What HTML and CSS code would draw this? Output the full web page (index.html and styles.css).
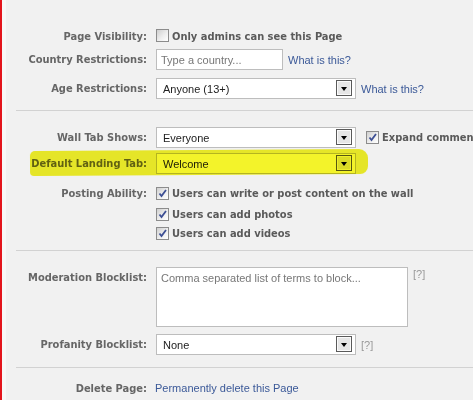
FILE: index.html
```html
<!DOCTYPE html>
<html>
<head>
<meta charset="utf-8">
<link rel="stylesheet" href="styles.css">
</head>
<body>
<div class="page">
  <div class="group g1">
    <div class="row r-vis">
      <span class="lbl">Page Visibility:</span>
      <div class="ctl"><span class="cb"></span><span class="check-text">Only admins can see this Page</span></div>
    </div>
    <div class="row r-country">
      <span class="lbl">Country Restrictions:</span>
      <div class="ctl"><span class="input">Type a country...</span><a class="link">What is this?</a></div>
    </div>
    <div class="row r-age">
      <span class="lbl">Age Restrictions:</span>
      <div class="ctl"><span class="select"><span class="val">Anyone (13+)</span><span class="arrow"><span class="tri"></span></span></span><a class="link">What is this?</a></div>
    </div>
  </div>
  <div class="sep"></div>
  <div class="group g2">
    <div class="row r-wall">
      <span class="lbl">Wall Tab Shows:</span>
      <div class="ctl"><span class="select"><span class="val">Everyone</span><span class="arrow"><span class="tri"></span></span></span><span class="cb checked gap"><svg viewBox="0 0 11 11" width="11" height="11"><path d="M2.5 5.5 L4.5 8 L9 2" fill="none" stroke="#3d4f94" stroke-width="1.8"/></svg></span><span class="check-text">Expand comments</span></div>
    </div>
    <div class="row r-landing">
      <span class="lbl">Default Landing Tab:</span>
      <div class="ctl"><span class="select"><span class="val">Welcome</span><span class="arrow"><span class="tri"></span></span></span></div>
    </div>
    <div class="row r-post">
      <span class="lbl">Posting Ability:</span>
      <div class="ctl"><span class="cb checked"><svg viewBox="0 0 11 11" width="11" height="11"><path d="M2.5 5.5 L4.5 8 L9 2" fill="none" stroke="#3d4f94" stroke-width="1.8"/></svg></span><span class="check-text">Users can write or post content on the wall</span></div>
    </div>
    <div class="row r-post2">
      <span class="lbl"></span>
      <div class="ctl"><span class="cb checked"><svg viewBox="0 0 11 11" width="11" height="11"><path d="M2.5 5.5 L4.5 8 L9 2" fill="none" stroke="#3d4f94" stroke-width="1.8"/></svg></span><span class="check-text">Users can add photos</span></div>
    </div>
    <div class="row r-post3">
      <span class="lbl"></span>
      <div class="ctl"><span class="cb checked"><svg viewBox="0 0 11 11" width="11" height="11"><path d="M2.5 5.5 L4.5 8 L9 2" fill="none" stroke="#3d4f94" stroke-width="1.8"/></svg></span><span class="check-text">Users can add videos</span></div>
    </div>
  </div>
  <div class="sep"></div>
  <div class="group g3">
    <div class="row r-mod">
      <span class="lbl">Moderation Blocklist:</span>
      <div class="ctl top"><span class="textarea">Comma separated list of terms to block...</span><span class="help">[?]</span></div>
    </div>
    <div class="row r-prof">
      <span class="lbl">Profanity Blocklist:</span>
      <div class="ctl"><span class="select"><span class="val">None</span><span class="arrow"><span class="tri"></span></span></span><span class="help">[?]</span></div>
    </div>
  </div>
  <div class="sep"></div>
  <div class="group g4">
    <div class="row r-del">
      <span class="lbl">Delete Page:</span>
      <div class="ctl"><a class="link del">Permanently delete this Page</a></div>
    </div>
  </div>
</div>
</body>
</html>
```
FILE: styles.css
```css
html, body {
  margin: 0;
  padding: 0;
  overflow: hidden;
}
body {
  font-family: "Liberation Sans", Arial, sans-serif;
  font-size: 11px;
  color: #333;
  background: #f2f2f2;
}
.page {
  width: 471px;
  height: 400px;
  border-left: 2px solid #e3141c;
  box-shadow: inset 4px 0 0 #f8f8f8;
  background: #f1f1f1;
  overflow: hidden;
}
.group {
  display: flex;
  flex-direction: column;
}
.row {
  display: grid;
  grid-template-columns: 145px 1fr;
  column-gap: 9px;
  align-items: center;
  height: 20px;
  position: relative;
}
.lbl {
  text-align: right;
  font-family: "DejaVu Sans Condensed", "DejaVu Sans", sans-serif;
  font-stretch: condensed;
  font-weight: bold;
  color: #666;
  white-space: nowrap;
  position: relative;
  z-index: 1;
}
.ctl {
  display: flex;
  align-items: center;
  white-space: nowrap;
  position: relative;
  z-index: 1;
}
.ctl.top { align-items: flex-start; }
.check-text {
  font-family: "DejaVu Sans Condensed", "DejaVu Sans", sans-serif;
  font-stretch: condensed;
  font-weight: bold;
  color: #5a5a5a;
  margin-left: 3px;
}
.cb {
  width: 13px;
  height: 13px;
  box-sizing: border-box;
  border: 1px solid #8c8c8c;
  background: linear-gradient(135deg, #cfcfcf 0%, #eeeeee 55%, #ffffff 100%);
  display: inline-flex;
  align-items: center;
  justify-content: center;
  flex: none;
}
.cb.gap { margin-left: 10px; }
.input {
  box-sizing: border-box;
  width: 127px;
  height: 21px;
  border: 1px solid #bdbdbd;
  background: #fff;
  color: #777;
  padding: 0 4px;
  display: inline-flex;
  align-items: center;
}
.select {
  box-sizing: border-box;
  width: 200px;
  height: 21px;
  border: 1px solid #bdbdbd;
  background: #fff;
  display: inline-flex;
  align-items: center;
  padding: 0 3px 0 6px;
  color: #222;
}
.val { flex: 1; }
.arrow {
  width: 16px;
  height: 16px;
  box-sizing: border-box;
  border: 1px solid #5a5a5a;
  background: #e6e6e6;
  box-shadow: inset 0 0 0 1px #fafafa;
  display: flex;
  justify-content: center;
  align-items: flex-end;
  padding-bottom: 4px;
  margin-top: -1px;
}
.tri {
  width: 0;
  height: 0;
  border-left: 3.5px solid transparent;
  border-right: 3.5px solid transparent;
  border-top: 4px solid #000;
}
.link {
  color: #3b5998;
  margin-left: 5px;
  cursor: pointer;
}
.link.del { margin-left: -1px; }
.help {
  color: #999;
  margin-left: 5px;
}
.textarea {
  box-sizing: border-box;
  width: 252px;
  height: 60px;
  border: 1px solid #bdbdbd;
  background: #fff;
  color: #777;
  padding: 4px 4px;
}
.r-mod .help { margin-top: 1px; }
.sep {
  height: 1px;
  background: #d2d2d2;
  margin-left: 14px;
}
/* vertical rhythm */
.g1 { padding-top: 26px; }
.r-vis { height: 21px; }
.r-vis .cb { margin-top: -3px; }
.r-country { margin-top: 2px; height: 21px; }
.r-age { margin-top: 8px; height: 21px; }
.g1 + .sep { margin-top: 11px; }
.g2 { padding-top: 16px; }
.r-wall { height: 21px; }
.r-landing { margin-top: 5px; height: 21px; }
.r-post { margin-top: 9px; }
.r-post2 { margin-top: 1px; }
.r-post3 { margin-top: -1px; }
.g2 + .sep { margin-top: 7px; }
.g3 { padding-top: 16px; }
.r-mod { height: 60px; align-items: start; }
.r-mod .lbl { padding-top: 4px; }
.r-prof { margin-top: 7px; height: 21px; }
.g3 + .sep { margin-top: 12px; }
.g4 { padding-top: 10px; }
/* yellow marker highlight */
.r-landing::before {
  content: "";
  position: absolute;
  left: 28px;
  width: 338px;
  top: -3px;
  bottom: -1px;
  background: #f3f32a;
  border-radius: 5px 9px 8px 4px;
  transform: rotate(-0.35deg);
  filter: blur(0.6px);
  z-index: 2;
  mix-blend-mode: multiply;
  pointer-events: none;
}
```
